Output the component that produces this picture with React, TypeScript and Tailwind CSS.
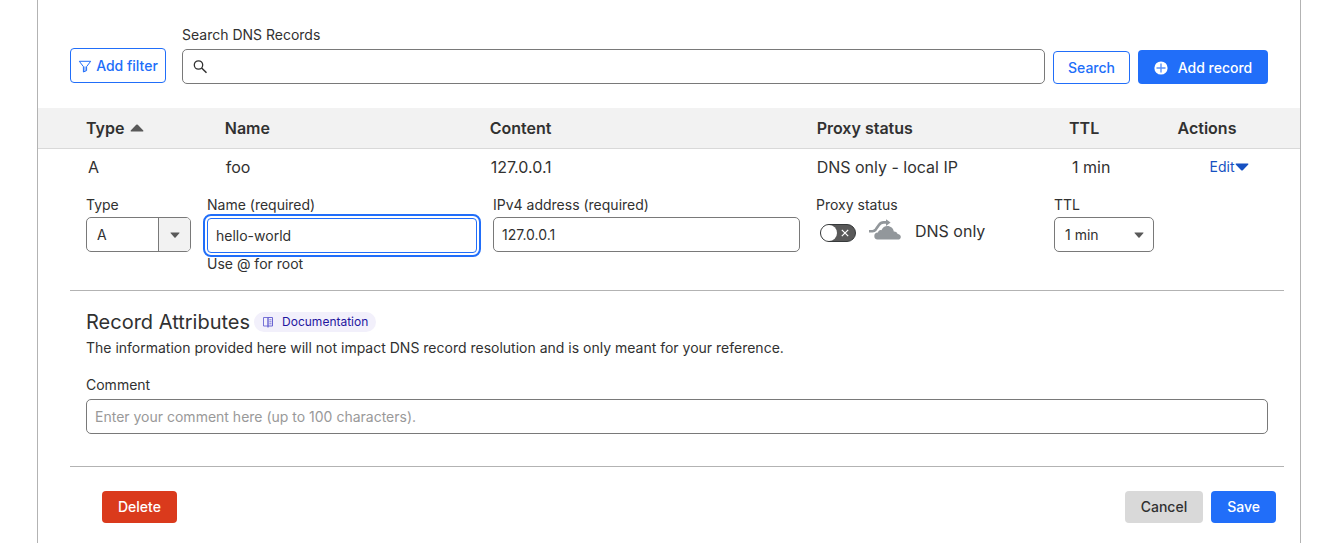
import { useState, type ReactNode } from 'react';

const inputClass =
  'h-[35px] w-full rounded-[5px] border border-[#797979] bg-white px-2 text-sm text-[#313131] placeholder:text-[#999999]';

function FilterIcon() {
  return (
    <svg viewBox="0 0 14 14" className="size-3.5" fill="none" stroke="currentColor" aria-hidden="true">
      <path d="M1.300 2.300h11.400L8.600 7.600v4L5.400 13V7.600z" strokeWidth="1" strokeLinejoin="round" />
      <path d="M5.400 7.600h3.200v4L5.400 13z" fill="currentColor" fillOpacity="0.45" stroke="none" />
    </svg>
  );
}

function SearchIcon() {
  return (
    <svg viewBox="0 0 16 16" className="size-4" fill="none" stroke="currentColor" aria-hidden="true">
      <circle cx="5.500" cy="6" r="4.200" strokeWidth="1.300" />
      <path d="M8.600 9l4.900 4.700" strokeWidth="1.500" />
    </svg>
  );
}

function PlusCircleIcon() {
  return (
    <svg viewBox="0 0 14 14" className="size-3.5" aria-hidden="true">
      <circle cx="7" cy="7" r="6.600" fill="white" />
      <path d="M7 2.500v9M2.500 7h9" stroke="#216ef9" strokeOpacity="0.75" strokeWidth="1.400" />
    </svg>
  );
}

function Caret({ up = false, className }: { up?: boolean; className: string }) {
  return (
    <svg viewBox="0 0 14 8" preserveAspectRatio="none" className={className} fill="currentColor" aria-hidden="true">
      <path d={up ? 'M6.2.8 .7 6.6q-.5.9.5.9h11.6q1 0 .5-.9L7.8.8q-.8-.8-1.6 0z' : 'M6.2 7.2.7 1.4Q.2.5 1.2.5h11.6q1 0 .5.9L7.8 7.2q-.8.8-1.6 0z'} />
    </svg>
  );
}

function BookIcon() {
  return (
    <svg viewBox="0 0 12 12" className="size-3" fill="none" stroke="#6a64d2" aria-hidden="true">
      <path d="M1.500 1.500H6v8.500H1.500z" strokeWidth="0.900" />
      <path d="M6 1.500h4.500V10H6z" strokeWidth="1" />
      <path d="M7.300 3.800h2.200M7.300 5.800h2.200M7.300 7.800h2.200" strokeWidth="0.900" />
      <path d="M5 10.800h2" strokeWidth="1" />
    </svg>
  );
}

function CloudIcon() {
  return (
    <svg viewBox="0 0 33 21" className="h-[21px] w-[33px]" fill="#92979b" aria-hidden="true">
      <path d="M9.500 20.500a3.500 3.500 0 0 1-3.200-3.500c0-2.100 1.600-3.600 3.700-3.400.3-1.800 1.700-2.800 3.400-2.400C14.500 8.500 16.800 7 19.400 7c3.300 0 5.900 2.300 6.400 5.500 2-.1 3.500.9 3.800 2.400 1.900.2 3.200 1.300 3.200 2.900 0 1.300-.7 2.300-1.700 2.700z" />
      <path d="M1 12.200h3.500c1.500 0 2.300-.4 3.200-1.600l3.200-4.600c1.300-1.800 2.500-2.600 4.800-2.600h3.500" fill="none" stroke="#92979b" strokeWidth="2.600" />
      <path d="M18 .2l4.600 3.200L18 6.900z" />
    </svg>
  );
}

function Field({ id, label, children }: { id: string; label: string; children: ReactNode }) {
  return (
    <div className="min-w-0">
      <label htmlFor={id} className="mb-0.5 block whitespace-nowrap text-sm">
        {label}
      </label>
      {children}
    </div>
  );
}

export default function App() {
  const [name, setName] = useState('hello-world');
  const [address, setAddress] = useState('127.0.0.1');
  const [comment, setComment] = useState('');
  const [query, setQuery] = useState('');
  const [proxied, setProxied] = useState(false);

  return (
    <main className="mr-[43px] ml-[37px] min-h-screen border-x border-[#b3b3b3] bg-white font-['Inter',sans-serif] text-sm text-[#313131]">
      <form className="flex items-end px-8 pt-[25px] pb-6" onSubmit={(e) => e.preventDefault()}>
        <button type="button" className="mb-px flex h-[35px] w-24 items-center justify-center gap-1 rounded-[4px] border border-[#216ef9] font-medium text-[#216ef9]">
          <FilterIcon />
          Add filter
        </button>
        <div className="ml-4 flex-1">
          <label htmlFor="search" className="mb-1 block text-sm">
            Search DNS Records
          </label>
          <div className="flex h-[35px] items-center gap-2 rounded-[5px] border border-[#797979] px-2.5">
            <SearchIcon />
            <input id="search" value={query} onChange={(e) => setQuery(e.target.value)} className="h-full flex-1 outline-none" />
          </div>
        </div>
        <button type="submit" className="ml-2 h-[33px] w-[77px] rounded-[4px] border border-[#216ef9] font-medium text-[#216ef9]">
          Search
        </button>
        <button type="button" className="ml-2 flex h-[34px] w-[130px] items-center justify-center gap-2.5 rounded-[4px] bg-[#216ef9] pt-px font-medium text-white">
          <PlusCircleIcon />
          Add record
        </button>
      </form>

      <table className="w-full table-fixed border-collapse text-left text-base">
        <colgroup>
          <col className="w-[14.8%]" />
          <col className="w-[21%]" />
          <col className="w-[25.9%]" />
          <col className="w-[20%]" />
          <col className="w-[8.6%]" />
          <col />
        </colgroup>
        <thead>
          <tr className="h-10 border-b border-[#d9d9d9] bg-[#f2f2f2]">
            <th className="pl-12 font-semibold">
              <span className="flex items-center gap-1.5">
                Type
                <Caret up className="h-2 w-3.5 text-[#595959]" />
              </span>
            </th>
            <th className="font-semibold">Name</th>
            <th className="font-semibold">Content</th>
            <th className="font-semibold">Proxy status</th>
            <th className="font-semibold">TTL</th>
            <th className="font-semibold">Actions</th>
          </tr>
        </thead>
        <tbody>
          <tr className="h-[37px]">
            <td className="pl-[50px]">A</td>
            <td className="pl-px">foo</td>
            <td className="pl-px">127.0.0.1</td>
            <td>DNS only - local IP</td>
            <td className="pl-[3px]">1 min</td>
            <td className="pl-8">
              <button type="button" className="flex items-center text-sm text-[#1651c2]">
                Edit
                <Caret className="h-2 w-3.5" />
              </button>
            </td>
          </tr>
        </tbody>
      </table>

      <form className="mr-4 ml-8" onSubmit={(e) => e.preventDefault()}>
        <div className="grid grid-cols-[105fr_270fr_307fr_222fr_100fr_98fr] gap-4 px-4 pt-2.5 pb-4">
          <Field id="type" label="Type">
            <div className="relative">
              <select id="type" defaultValue="A" className="h-[35px] w-full appearance-none rounded-[5px] border border-[#797979] bg-white px-2.5 text-sm">
                <option>A</option>
                <option>AAAA</option>
                <option>CNAME</option>
              </select>
              <span className="pointer-events-none absolute inset-y-px right-px flex w-8 items-center justify-center rounded-r-[4px] border-l border-[#797979] bg-[#f2f2f2]">
                <Caret className="h-1.5 w-2.5 text-[#595959]" />
              </span>
            </div>
          </Field>
          <Field id="name" label="Name (required)">
            <input
              id="name"
              value={name}
              onChange={(e) => setName(e.target.value)}
              className="mt-px h-[35px] w-full rounded-[4px] border border-[#216ef9] px-2 text-sm outline-2 outline-offset-2 outline-[#216ef9]"
            />
            <p className="mt-px">Use @ for root</p>
          </Field>
          <Field id="address" label="IPv4 address (required)">
            <input id="address" value={address} onChange={(e) => setAddress(e.target.value)} className={inputClass} />
          </Field>
          <Field id="proxy" label="Proxy status">
            <div className="flex h-8 items-center">
              <span className="relative ml-1 inline-flex h-[18px] w-9">
                <input
                  id="proxy"
                  type="checkbox"
                  role="switch"
                  checked={proxied}
                  onChange={(e) => setProxied(e.target.checked)}
                  className="size-full appearance-none rounded-full border border-[#36393a] bg-[#595959] checked:bg-[#f6821f]"
                />
                <span className="pointer-events-none absolute inset-0 flex items-center justify-between pr-[7px] pl-px">
                  <span className="size-4 rounded-full bg-white" />
                  <svg viewBox="0 0 8 8" className="size-2" stroke="white" strokeWidth="1.2" aria-hidden="true">
                    <path d="M.8.8l6.400 6.400M7.200.8L.8 7.200" />
                  </svg>
                </span>
              </span>
              <span className="mr-3.5 mb-2 ml-3">
                <CloudIcon />
              </span>
              <span className="mb-1 text-base whitespace-nowrap">DNS only</span>
            </div>
          </Field>
          <Field id="ttl" label="TTL">
            <div className="relative">
              <select id="ttl" defaultValue="1 min" className="h-[35px] w-full appearance-none rounded-[5px] border border-[#797979] bg-white px-2.5 text-sm">
                <option>1 min</option>
                <option>5 min</option>
                <option>1 hr</option>
              </select>
              <span className="pointer-events-none absolute inset-y-0 right-2.5 flex items-center">
                <Caret className="h-1.5 w-2.5 text-[#595959]" />
              </span>
            </div>
          </Field>
        </div>

        <section className="border-y border-[#b3b3b3] px-4 pt-[17px] pb-8">
          <div className="flex items-center gap-1">
            <h2 className="text-xl leading-7">Record Attributes</h2>
            <a href="#documentation" className="flex h-5 items-center gap-2 rounded-full bg-[#f2f0fb] px-2 text-xs text-[#1f16a0]">
              <BookIcon />
              Documentation
            </a>
          </div>
          <p className="mt-0.5">The information provided here will not impact DNS record resolution and is only meant for your reference.</p>
          <div className="mt-[17px]">
            <label htmlFor="comment" className="mb-1 block">
              Comment
            </label>
            <input
              id="comment"
              value={comment}
              onChange={(e) => setComment(e.target.value)}
              placeholder="Enter your comment here (up to 100 characters)."
              className={inputClass}
            />
          </div>
        </section>

        <div className="flex gap-2 pt-6 pr-2 pb-5 pl-8 font-medium">
          <button type="button" className="mr-auto h-8 rounded-[4px] bg-[#da3a1c] px-4 text-white">
            Delete
          </button>
          <button type="button" className="h-8 rounded-[4px] bg-[#d9d9d9] px-4">
            Cancel
          </button>
          <button type="submit" className="h-8 rounded-[4px] bg-[#216ef9] px-4 text-white">
            Save
          </button>
        </div>
      </form>
    </main>
  );
}
